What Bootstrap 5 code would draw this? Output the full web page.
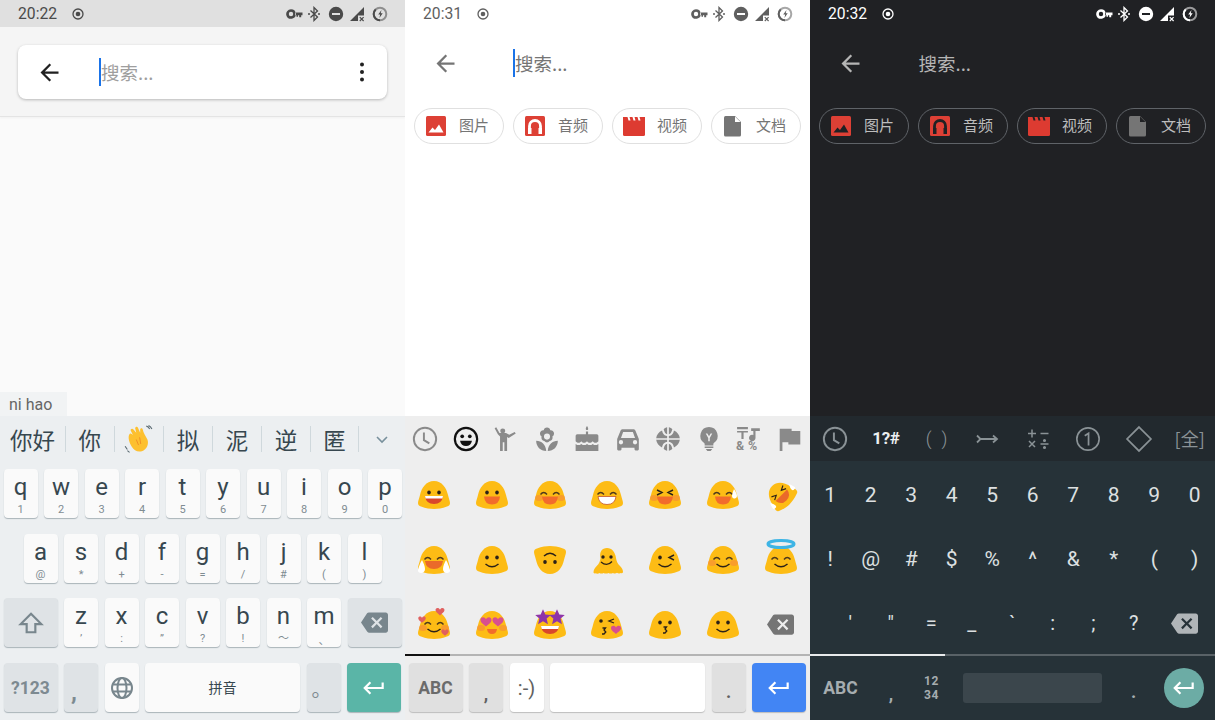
<!DOCTYPE html>
<html lang="zh">
<head>
<meta charset="utf-8">
<title>搜索</title>
<link href="https://cdn.jsdelivr.net/npm/bootstrap@5.3.0/dist/css/bootstrap.min.css" rel="stylesheet">
<style>
html,body{margin:0;height:720px;overflow:hidden;background:#fff}
body{font-family:Roboto,"Noto Sans CJK SC",sans-serif}
svg{display:block;overflow:visible;flex:none}
.cjk{font-family:"Noto Sans CJK SC",sans-serif}
.phone{width:405px;height:720px;flex:none}
.stat{height:27px;padding:0 17.5px 0 18px;color:#4a4a4a}
.stat .tm{font-size:15.7px;width:54px;line-height:27px}
.p2 .stat{color:#5f5f5f}
.p3 .stat{color:#fff}
.p1 .stat{background:#e0e0e0}
.rec{width:12px;height:12px}
.sico{width:102px;height:16px}
.p1 .app{background:#fafafa}
.p2 .app{background:#fff}
.p3{background:#202124}
.hd1{height:90px;background:#f5f5f5;border-bottom:1px solid #e4e4e4;box-shadow:0 1px 2px rgba(0,0,0,.04);padding:18px}
.scard{height:54px;background:#fff;border-radius:8px;box-shadow:0 1px 3px rgba(0,0,0,.25);padding:0 22px 0 18px}
.hd1 .caret-bar{margin-left:36px}
.back{width:27px;height:27px;fill:#212121}
.p2 .back{fill:#757575}
.p3 .back{fill:#b5b5b5}
.caret-bar{width:2px;height:28px;background:#1a73e8;flex:none}
.ph{font-size:18.5px;color:#9e9e9e;line-height:28px}
.p2 .ph{color:#757575}
.p3 .ph{color:#b5b5b5}
.hd2{height:73px;padding:0 0 2px 27px}
.hd2 .back{margin-top:1px}
.hd2 .caret-bar{margin-left:54px}
.p3 .hd2 .ph{margin-left:54.5px}
.chips{padding:8px 0 0 9px;gap:9px}
.chipx{width:90px;height:36px;border:1px solid #e0e0e0;border-radius:18px;padding-left:10px;gap:12px;font-size:15px;color:#757575}
.chipx span{margin-top:-2px}
.p3 .chipx{border-color:#5f6368;color:#bdbdbd}
.chipx svg{width:22px;height:22px}
.pin{width:67px;height:24px;background:#f1f3f4;color:#666;font-size:16px;line-height:25px;padding-left:9px}
.kb{height:304px;flex:none}
.kb1{background:#eceff1}
.kb2{background:#eee}
.kb3{background:#263238}
.cand{height:46px;color:#37474f;font-size:22.5px}
.cd{height:26px;border-right:1px solid #cfd8dc;line-height:26px;text-align:center}
.rowk{height:49px;gap:6.5px;padding:0 3.5px}
.rowk+.rowk{margin-top:15.7px}
.rows{padding-top:7px}
.ky{width:34px;height:49px;flex:none;background:#fafafa;border-radius:4px;box-shadow:0 1px 1px #aab4b9;color:#37474f}
.k15{width:54px}
.ksp{width:155px}
.kfn{background:#dfe3e6}
.kl{font-size:24px;line-height:28px;padding-top:4px;text-align:center}
.kh{font-size:11px;line-height:12px;text-align:center;color:#7f8c92;margin-top:3px}
.kc{display:flex;align-items:center;justify-content:center;height:100%}
.fnt{font-size:17.5px;font-weight:700;color:#7d8a91;padding-top:2px}
.punct{font-size:24px;font-weight:700;line-height:1;color:#7d8a91}
.pleft{align-items:flex-end;justify-content:flex-start;padding:0 0 8px 7px}
.pcomma{align-items:flex-end;padding-bottom:9px;font-size:18px}
.pdot{align-items:flex-end;padding-bottom:11px;font-size:18px}
.pcirc{font-size:20px;color:#7d8a91;justify-content:flex-start;align-items:flex-end;padding:0 0 8px 5px}
.kb2 .ky{background:#fff;box-shadow:0 1px 1px #bdbdbd;color:#616161}
.kb2 .kfn{background:#e0e0e0}
.kb2 .fnt{color:#6b6b6b}
.kb2 .punct{color:#616161}
.ken1{background:#5ab5a7!important}
.ken2{background:#4285f4!important}
.ken svg{width:26px;height:26px;fill:#fff}
.tabs{height:45px;padding-top:1px}
.tabc{width:40.5px}
.tabc svg{width:26px;height:26px;color:#8a8a8a}
.egrid{height:193px;padding-top:1px}
.erow{height:65px}
.ecell{width:57.857px}
.ecell svg{width:32px;height:28px}
.ecell .bksp{width:27px;height:27px;fill:#757575}
.dvd{height:2px;background:#b4b4b4}
.dvd i{display:block;height:2px;width:45px;background:#111}
.kb3 .dvd{background:#596267}
.kb3 .dvd i{width:135px;background:#e8eaeb}
.tabs3{background:#22292e;height:45px}
.tab3c{width:50.625px;color:#8a9296;font-size:18px}
.tab3c svg{width:26px;height:26px}
.t1q{color:#eceff1;font-weight:700;font-size:17px;letter-spacing:-.3px}
.parens{gap:10px;font-weight:300}
.sgrid{height:193px;color:#dde0e1;font-size:21px}
.srow{height:66px}
.srow1{padding-top:4px}
.srow3{padding-left:20px;height:60px}
.scell{width:40.5px}
.sym{font-size:20px}
.s3back{width:61px}
.s3back svg{width:27px;height:27px;fill:#b0b5b8}
.kb3 .ky{background:transparent;box-shadow:none;color:#b5bbbe}
.kb3 .fnt{color:#a6adb0}
.kb3 .punct{color:#a6adb0}
.spc3{width:139px;height:30px;background:#3b464c;border-radius:3px}
.k1234{font-size:12px;font-weight:700;line-height:14px;text-align:center;color:#a6adb0;letter-spacing:.6px}
.circ{width:40px;height:40px;border-radius:50%;background:#6caca5}
.circ svg{width:26px;height:26px;fill:#fff}
</style>
</head>
<body class="d-flex">
<svg class="d-none" xmlns="http://www.w3.org/2000/svg">
<defs>
<symbol id="sts" viewBox="0 0 102 16">
<path fill="currentColor" fill-rule="evenodd" d="M5 3.200a4.800 4.800 0 1 1-4.600 6.200A4.800 4.800 0 0 1 5 3.200zm0 2.600a2.200 2.200 0 1 0 0 4.400 2.200 2.200 0 0 0 0-4.400zM9 6.600h7.500v2.600h-1.300v2h-2v-2h-1.200v1.500H10.500V9.200H9z"/>
<path fill="none" stroke="currentColor" stroke-width="1.300" d="M24.500 4.500l7 6.500-3.500 3.500V1.500l3.500 3.500-7 6.500"/>
<circle cx="23" cy="8" r="1" fill="currentColor"/><circle cx="33" cy="8" r="1" fill="currentColor"/>
<path fill="currentColor" fill-rule="evenodd" d="M50 .8a7.200 7.200 0 1 1 0 14.400A7.200 7.200 0 0 1 50 .8zM46 7v2h8V7z"/>
<path fill="currentColor" d="M64 15L78 1v8.500h-6V15z"/>
<path fill="none" stroke="currentColor" stroke-width="1.200" d="M73.800 11.200l3.800 3.800m0-3.800L73.800 15"/>
<circle cx="94" cy="8" r="6.300" fill="none" stroke="currentColor" stroke-width="2" opacity=".55"/>
<path fill="none" stroke="currentColor" stroke-width="2" d="M94 14.300a6.300 6.300 0 0 1-6.300-6.300 6.300 6.300 0 0 1 2-4.600"/>
<path fill="currentColor" d="M95.500 4l-3.300 4.600h2l-.8 3.400 3.300-4.800h-2z"/>
</symbol>
<symbol id="rc" viewBox="0 0 12 12"><circle cx="6" cy="6" r="5" fill="none" stroke="currentColor" stroke-width="1.300"/><circle cx="6" cy="6" r="2.300" fill="currentColor"/></symbol>
<symbol id="bk" viewBox="0 0 24 24"><path d="M20 11H7.830l5.590-5.590L12 4l-8 8 8 8 1.410-1.410L7.830 13H20v-2z"/></symbol>
<symbol id="ent" viewBox="0 0 24 24"><path d="M19 7v4H5.830l3.580-3.590L8 6l-6 6 6 6 1.410-1.410L5.830 13H21V7z"/></symbol>
<symbol id="del" viewBox="0 0 24 24"><path d="M22 3H7c-.69 0-1.230.35-1.590.88L0 12l5.410 8.110c.36.53.9.89 1.590.89h15c1.100 0 2-.9 2-2V5c0-1.100-.9-2-2-2zm-3 12.590L17.590 17 14 13.410 10.410 17 9 15.590 12.590 12 9 8.410 10.410 7 14 10.590 17.590 7 19 8.410 15.410 12 19 15.590z"/></symbol>
<symbol id="i-img" viewBox="0 0 22 22"><rect x="1" y="1" width="20" height="20" rx="1.500" fill="#dd4035"/><path fill="currentColor" d="M3.500 17.500l4-5 2.500 2.500 4-5.500 4.500 8z"/></symbol>
<symbol id="i-aud" viewBox="0 0 22 22"><rect x="1" y="1" width="20" height="20" rx="1.500" fill="#dd4035"/><path fill="none" stroke="currentColor" stroke-width="2.800" d="M5.500 18v-7a5.500 5.500 0 0 1 11 0v7"/><rect x="4" y="13" width="3.500" height="6" fill="currentColor"/><rect x="14.500" y="13" width="3.500" height="6" fill="currentColor"/></symbol>
<symbol id="i-vid" viewBox="0 0 22 22"><path fill="#dd3b31" d="M0 2h22v17.500a1.500 1.500 0 0 1-1.500 1.500h-19A1.500 1.500 0 0 1 0 19.500z"/><path fill="currentColor" d="M4.500 2h2l1 3.500h-2zM9.500 2h2l1 3.500h-2zM14.500 2h2l1 3.500h-2z"/></symbol>
<symbol id="i-doc" viewBox="0 0 22 22"><path fill="#757575" d="M3.500 1H13l6 6v13a1.500 1.500 0 0 1-1.500 1.500h-14A1.500 1.500 0 0 1 2 20V2.500A1.500 1.500 0 0 1 3.500 1z"/><path fill="currentColor" d="M13 1.500V7h5.500z"/></symbol>
<symbol id="clk" viewBox="0 0 24 24"><circle cx="12" cy="12" r="10.300" fill="none" stroke="currentColor" stroke-width="1.800"/><path fill="none" stroke="currentColor" stroke-width="1.800" d="M11 6v7l5 3"/></symbol>
<g id="blob"><path fill="#fdbc15" d="M16 0C24 0 28.500 7 30 14c.5 2.500 2 6 2 8 0 2-1 3-3 3.500C24 27.300 20 28 16 28S8 27.300 3 25.500C1 25 0 24 0 22c0-2 1.500-5.500 2-8C3.500 7 8 0 16 0z"/></g>
<g id="blush"><ellipse cx="5" cy="17" rx="4" ry="3" fill="#f79036" opacity=".7"/><ellipse cx="27" cy="17" rx="4" ry="3" fill="#f79036" opacity=".7"/></g>
<g id="arcs"><path fill="none" stroke="#4e3a1c" stroke-width="1.400" d="M6.500 13.500q3.200-4 6.500 0M19 13.500q3.200-4 6.500 0"/></g>
<g id="dots"><ellipse cx="11" cy="11.500" rx="1.800" ry="2.100" fill="#2b2118"/><ellipse cx="21" cy="11.500" rx="1.800" ry="2.100" fill="#2b2118"/></g>
<g id="mouth"><path fill="#f26c2b" d="M8 15.500h16q-.8 8-8 8t-8-8z"/></g>
<g id="smile"><path fill="none" stroke="#2b2118" stroke-width="1.500" d="M9.500 18q6.500 5.500 13 0"/></g>
<g id="heart"><path d="M0 -1.500C-1-4-5-4-5-1c0 2.500 3 4 5 6 2-2 5-3.500 5-6 0-3-4-3-5-.5z"/></g>
<g id="star"><path fill="#8e35a8" d="M0-6l1.800 4 4.200.4-3.200 2.800 1 4.300L0 3.200l-3.800 2.300 1-4.300L-6-1.600l4.200-.4z"/></g>
</defs>
</svg>

<!-- Panel 1 -->
<div class="phone p1 d-flex flex-column">
  <div class="stat d-flex align-items-center"><span class="tm">20:22</span><svg class="rec"><use href="#rc"/></svg><svg class="sico ms-auto"><use href="#sts"/></svg></div>
  <div class="app flex-grow-1 d-flex flex-column">
    <div class="hd1"><div class="scard d-flex align-items-center"><svg class="back"><use href="#bk"/></svg><span class="caret-bar"></span><span class="ph cjk">搜索...</span>
      <span class="ms-auto d-flex flex-column"><svg width="6" height="22" viewBox="0 0 6 22"><circle cx="3" cy="3.500" r="2" fill="#212121"/><circle cx="3" cy="11" r="2" fill="#212121"/><circle cx="3" cy="18.500" r="2" fill="#212121"/></svg></span></div></div>
    <div class="mt-auto pin">ni hao</div>
  </div>
  <div class="kb kb1">
    <div class="cand d-flex align-items-center cjk">
      <div class="cd" style="width:66px">你好</div><div class="cd" style="width:48.5px">你</div>
      <div class="cd d-flex align-items-center justify-content-center" style="width:49.5px"><svg width="29" height="29" viewBox="0 0 26 26"><path fill="#fdc02f" d="M5 8c1-1 2 0 3 1L6 5c-.5-1.500 1.500-2.500 2.500-1L11 7 10 3c0-1.500 2-2 2.500-.5l2 4.500 0-3c.3-1.500 2-1.500 2.300 0 .5 3 2.700 6 4.200 9 1.500 4-.5 9-5 10.500-4 1.200-7-1-9-4C5 16 3 11 5 8z"/><path fill="none" stroke="#f08a24" stroke-width=".8" d="M14 11l1 6M11 13l2 5"/><path fill="none" stroke="#5a6a72" stroke-width="1" d="M1 19l2 3M3 23l2 1.500M20 1q2 .5 3 2.500M22 .5q2 1 3 3"/></svg></div>
      <div class="cd" style="width:49px">拟</div><div class="cd" style="width:49px">泥</div><div class="cd" style="width:49px">逆</div><div class="cd" style="width:48px">匿</div>
      <div class="flex-grow-1 d-flex justify-content-center"><svg width="14" height="9" viewBox="0 0 14 9"><path fill="none" stroke="#78909c" stroke-width="1.600" d="M2 2l5 5 5-5"/></svg></div>
    </div>
    <div class="rows">
      <div class="rowk d-flex">
        <div class="ky"><div class="kl">q</div><div class="kh">1</div></div><div class="ky"><div class="kl">w</div><div class="kh">2</div></div><div class="ky"><div class="kl">e</div><div class="kh">3</div></div><div class="ky"><div class="kl">r</div><div class="kh">4</div></div><div class="ky"><div class="kl">t</div><div class="kh">5</div></div><div class="ky"><div class="kl">y</div><div class="kh">6</div></div><div class="ky"><div class="kl">u</div><div class="kh">7</div></div><div class="ky"><div class="kl">i</div><div class="kh">8</div></div><div class="ky"><div class="kl">o</div><div class="kh">9</div></div><div class="ky"><div class="kl">p</div><div class="kh">0</div></div>
      </div>
      <div class="rowk d-flex justify-content-center">
        <div class="ky"><div class="kl">a</div><div class="kh">@</div></div><div class="ky"><div class="kl">s</div><div class="kh">*</div></div><div class="ky"><div class="kl">d</div><div class="kh">+</div></div><div class="ky"><div class="kl">f</div><div class="kh">-</div></div><div class="ky"><div class="kl">g</div><div class="kh">=</div></div><div class="ky"><div class="kl">h</div><div class="kh">/</div></div><div class="ky"><div class="kl">j</div><div class="kh">#</div></div><div class="ky"><div class="kl">k</div><div class="kh">(</div></div><div class="ky"><div class="kl">l</div><div class="kh">)</div></div>
      </div>
      <div class="rowk d-flex">
        <div class="ky k15 kfn"><div class="kc"><svg width="26" height="26" viewBox="0 0 24 24"><path fill="none" stroke="#78868d" stroke-width="2" d="M12 3.500l9.500 9.500H16v7.500H8V13H2.500z"/></svg></div></div>
        <div class="ky"><div class="kl">z</div><div class="kh">ʼ</div></div><div class="ky"><div class="kl">x</div><div class="kh">:</div></div><div class="ky"><div class="kl">c</div><div class="kh">”</div></div><div class="ky"><div class="kl">v</div><div class="kh">?</div></div><div class="ky"><div class="kl">b</div><div class="kh">!</div></div><div class="ky"><div class="kl">n</div><div class="kh">～</div></div><div class="ky"><div class="kl">m</div><div class="kh cjk">、</div></div>
        <div class="ky k15 kfn"><div class="kc"><svg width="27" height="27" viewBox="0 0 24 24" fill="#78868d"><use href="#del"/></svg></div></div>
      </div>
      <div class="rowk d-flex">
        <div class="ky k15 kfn"><div class="kc fnt">?123</div></div>
        <div class="ky kfn"><div class="kc punct pleft">,</div></div>
        <div class="ky"><div class="kc"><svg width="24" height="24" viewBox="0 0 24 24" fill="none" stroke="#78868d" stroke-width="2"><circle cx="12" cy="12" r="10"/><ellipse cx="12" cy="12" rx="4.500" ry="10"/><path d="M2.500 8.500h19M2.500 15.500h19"/></svg></div></div>
        <div class="ky ksp"><div class="kc cjk" style="font-size:14px">拼音</div></div>
        <div class="ky kfn"><div class="kc cjk pcirc">。</div></div>
        <div class="ky k15 ken ken1"><div class="kc"><svg><use href="#ent"/></svg></div></div>
      </div>
    </div>
  </div>
</div>

<!-- Panel 2 -->
<div class="phone p2 d-flex flex-column">
  <div class="stat d-flex align-items-center"><span class="tm">20:31</span><svg class="rec"><use href="#rc"/></svg><svg class="sico ms-auto"><use href="#sts"/></svg></div>
  <div class="app flex-grow-1">
    <div class="hd2 d-flex align-items-center"><svg class="back"><use href="#bk"/></svg><span class="caret-bar"></span><span class="ph cjk">搜索...</span></div>
    <div class="chips d-flex cjk">
      <div class="chipx d-flex align-items-center"><svg color="#fff"><use href="#i-img"/></svg><span>图片</span></div>
      <div class="chipx d-flex align-items-center"><svg color="#fff"><use href="#i-aud"/></svg><span>音频</span></div>
      <div class="chipx d-flex align-items-center"><svg color="#fff"><use href="#i-vid"/></svg><span>视频</span></div>
      <div class="chipx d-flex align-items-center"><svg color="#fff"><use href="#i-doc"/></svg><span>文档</span></div>
    </div>
  </div>
  <div class="kb kb2">
    <div class="tabs d-flex align-items-center">
      <div class="tabc d-flex justify-content-center"><svg><use href="#clk"/></svg></div>
      <div class="tabc d-flex justify-content-center"><svg viewBox="0 0 24 24" style="color:#111"><circle cx="12" cy="12" r="10.300" fill="none" stroke="currentColor" stroke-width="2"/><circle cx="8.500" cy="9.500" r="1.700" fill="currentColor"/><circle cx="15.500" cy="9.500" r="1.700" fill="currentColor"/><path fill="currentColor" d="M6.500 13.500h11q-1 5-5.500 5t-5.500-5z"/></svg></div>
      <div class="tabc d-flex justify-content-center"><svg viewBox="0 0 24 24" fill="#8a8a8a"><circle cx="9" cy="4.500" r="2.300"/><path d="M1.500 2l1.500-.8L6 6.500h6l3 1.500 5-2.500 1 1.500-6.500 4-1.500-.8V23h-2.500v-8h-1.500v8H6.500V9.800L4.500 7.500z"/></svg></div>
      <div class="tabc d-flex justify-content-center"><svg viewBox="0 0 24 24" fill="#8a8a8a"><path fill-rule="evenodd" d="M12 1.500a3 3 0 0 1 3 2.500 3 3 0 0 1 3.500 3 3 3 0 0 1-1.500 2.800 3 3 0 0 1-2.500 4 3 3 0 0 1-5 0 3 3 0 0 1-2.500-4A3 3 0 0 1 5.500 7 3 3 0 0 1 9 4a3 3 0 0 1 3-2.500zm0 5.500a2.800 2.800 0 1 0 0 5.600 2.800 2.800 0 0 0 0-5.600z"/><path d="M2 13.500c5 0 9 3.500 9.300 9.500C6 23 2 19 2 13.500zM22 13.500c-5 0-9 3.500-9.300 9.500C18 23 22 19 22 13.500z"/></svg></div>
      <div class="tabc d-flex justify-content-center"><svg viewBox="0 0 24 24" fill="#8a8a8a"><path d="M12 0c1 1.500 1.300 2.300 1 3.200-.3.800-1.700.8-2 0-.3-.9 0-1.700 1-3.200zM11 5h2v3h-2zM3 7.500h18a1.500 1.500 0 0 1 1.500 1.500v5c-2 2-3.500 2-5.200 0-2 2-3.600 2-5.300 0-2 2-3.500 2-5.300 0-1.600 2-3.200 2-5.200 0V9A1.500 1.500 0 0 1 3 7.500zM1.500 16.500c2 1.500 3.500 1.500 5.200 0 2 1.500 3.500 1.500 5.300 0 2 1.500 3.500 1.500 5.300 0 1.700 1.500 3.200 1.500 5.200 0V23h-21z"/></svg></div>
      <div class="tabc d-flex justify-content-center"><svg viewBox="0 0 24 24" fill="#8a8a8a"><path fill-rule="evenodd" d="M5 4.500C5.300 3.600 6.200 3 7 3h10c.8 0 1.700.6 2 1.500L22 12v9.500a1 1 0 0 1-1 1h-2a1 1 0 0 1-1-1V20H6v1.500a1 1 0 0 1-1 1H3a1 1 0 0 1-1-1V12zM7.500 5.500L5.500 11h13l-2-5.500zM5.500 13a2 2 0 1 0 0 4 2 2 0 0 0 0-4zm13 0a2 2 0 1 0 0 4 2 2 0 0 0 0-4z"/></svg></div>
      <div class="tabc d-flex justify-content-center"><svg viewBox="0 0 24 24" fill="#8a8a8a"><path d="M11.200 1.100v6.500C9.800 7.400 8.700 6 8 3 8.800 2 10 1.400 11.200 1.100zM12.800 1.100C14 1.400 15.200 2 16 3c-.7 3-1.800 4.400-3.200 4.600zM6.500 4.200c.6 2.800 2 5 4.700 5v2H1.100C1.400 8.300 3.500 5.500 6.500 4.200zM17.500 4.200c3 1.300 5.100 4.100 5.400 7H12.800v-2c2.700 0 4.100-2.200 4.700-5zM1.100 12.800h10.100v2c-2.700 0-4.100 2.200-4.700 5-3-1.300-5.100-4.100-5.400-7zM12.800 12.800h10.100c-.3 2.900-2.400 5.700-5.400 7-.6-2.800-2-5-4.700-5zM11.200 16.400v6.500C10 22.600 8.800 22 8 21c.7-3 1.800-4.400 3.200-4.600zM12.800 16.400c1.400.2 2.500 1.600 3.200 4.600-.8 1-2 1.600-3.200 1.900z"/></svg></div>
      <div class="tabc d-flex justify-content-center"><svg viewBox="0 0 24 24" fill="#8a8a8a"><path fill-rule="evenodd" d="M12 1a8 8 0 0 1 4.500 14.600c-.3.200-.5.500-.5.900V18H8v-1.500c0-.4-.2-.7-.5-.9A8 8 0 0 1 12 1zM9 7l2.300 4v3h1.400v-3L15 7h-1.500L12 9.500 10.500 7z"/><path d="M8 19h8v1.300H8zM9 21.300h6L13.500 23h-3z"/></svg></div>
      <div class="tabc d-flex justify-content-center"><svg viewBox="0 0 24 24" fill="#8a8a8a"><path d="M1 1h10v2H1zM1 4.500h10V6H7v6H5V6H1zM14 2h8v2.500h-4v6.500a3 3 0 1 1-2-2.800V4.500h-2z"/><text x="0" y="22.500" font-family="Roboto,sans-serif" font-size="11.500" font-weight="700">&amp;</text><text x="11" y="22.500" font-family="Roboto,sans-serif" font-size="11.500" font-weight="700">%</text></svg></div>
      <div class="tabc d-flex justify-content-center"><svg viewBox="0 0 24 24" fill="#8a8a8a"><path d="M2.500 2.500h11v2h8V17h-11v-2H5v8H2.500z"/></svg></div>
    </div>
    <div class="egrid">
      <div class="erow d-flex align-items-center">
        <div class="ecell d-flex justify-content-center"><svg viewBox="0 0 32 28"><use href="#blob"/><use href="#dots"/><path fill="#d9472b" d="M7 15h18q-1 8-9 8t-9-8z"/><path fill="#fff" d="M7 15h18l-.6 2.500H7.600z"/></svg></div>
        <div class="ecell d-flex justify-content-center"><svg viewBox="0 0 32 28"><use href="#blob"/><use href="#dots"/><use href="#mouth"/></svg></div>
        <div class="ecell d-flex justify-content-center"><svg viewBox="0 0 32 28"><use href="#blob"/><use href="#blush"/><use href="#arcs"/><use href="#mouth"/></svg></div>
        <div class="ecell d-flex justify-content-center"><svg viewBox="0 0 32 28"><use href="#blob"/><use href="#arcs"/><path fill="#fff" stroke="#c4552a" stroke-width=".8" d="M7 15.500h18q-1 8-9 8t-9-8z"/></svg></div>
        <div class="ecell d-flex justify-content-center"><svg viewBox="0 0 32 28"><use href="#blob"/><use href="#blush"/><path fill="none" stroke="#2b2118" stroke-width="1.400" d="M8 9l5 2.500-5 2.500M24 9l-5 2.500 5 2.500"/><use href="#mouth"/></svg></div>
        <div class="ecell d-flex justify-content-center"><svg viewBox="0 0 32 28"><use href="#blob"/><use href="#arcs"/><use href="#mouth"/><path fill="#fff" d="M27 8c1.500 2.500 3 5 3 7s-2 2.500-3 2.500-2-1-2-2.500 1-4.500 2-7z"/></svg></div>
        <div class="ecell d-flex justify-content-center"><svg viewBox="0 0 32 28"><g transform="rotate(-45 16 14) translate(1.600 1.400) scale(.9)"><use href="#blob"/><path fill="none" stroke="#2b2118" stroke-width="1.300" d="M7 8l5 2.500-5 2.500M25 8l-5 2.500 5 2.500"/><path fill="#ea6a2a" d="M7 14.500h18q-1 8-9 8t-9-8z"/><path fill="#fff" d="M1 12c1.500 2 2.500 4 2.500 6s-1.500 2-2.500 2-2.500-.5-2-2 1-4 2-6zM31 12c-1.500 2-2.500 4-2.500 6s1.500 2 2.500 2 2.500-.5 2-2-1-4-2-6z"/></g></svg></div>
      </div>
      <div class="erow d-flex align-items-center">
        <div class="ecell d-flex justify-content-center"><svg viewBox="0 0 32 28"><use href="#blob"/><use href="#arcs"/><path fill="#ea6a2a" d="M7 15h18q-1 8-9 8t-9-8z"/><path fill="#fff" d="M4 14c1.500 3 3 6 3 9s-2.500 4-4 4-3.500-1-3-3 2-7 4-10zM28 14c-1.500 3-3 6-3 9s2.500 4 4 4 3.500-1 3-3-2-7-4-10z"/></svg></div>
        <div class="ecell d-flex justify-content-center"><svg viewBox="0 0 32 28"><use href="#blob"/><use href="#dots"/><use href="#smile"/></svg></div>
        <div class="ecell d-flex justify-content-center"><svg viewBox="0 0 32 28"><path fill="#fdbc15" d="M16 28C8 28 3.500 21 2 14 1.500 11.500 0 8 0 6 0 4 1 3 3 2.500 8 .7 12 0 16 0s8 .7 13 2.500c2 .5 3 1.500 3 3.500 0 2-1.500 5.500-2 8-1.500 7-6 14-14 14z"/><ellipse cx="11" cy="16" rx="1.800" ry="2.100" fill="#2b2118"/><ellipse cx="21" cy="16" rx="1.800" ry="2.100" fill="#2b2118"/><path fill="none" stroke="#2b2118" stroke-width="1.500" d="M10 10q6-5.500 12 0"/></svg></div>
        <div class="ecell d-flex justify-content-center"><svg viewBox="0 0 32 28"><path fill="#fdbc15" d="M16 2c5 0 8 4 9 10 .5 3 1 5 4 8 2 2 3 4 3 6 0 1-1 1.500-2 1-1.500.8-3 .5-4-.2-1 1-3 1-4 .2-1.500.8-3.500.8-4.500 0-1.500.8-3.500.8-5 0-1 .8-3 .8-4 0-1 .7-2.500 1-4 .2-1 .5-2 0-2-1 0-2 1-4 3-6 3-3 3.500-5 4-8C8 6 11 2 16 2z"/><circle cx="12" cy="11" r="1.700" fill="#2b2118"/><circle cx="20" cy="11" r="1.700" fill="#2b2118"/><path fill="none" stroke="#2b2118" stroke-width="1.300" d="M10 16q6 5 11-.5"/></svg></div>
        <div class="ecell d-flex justify-content-center"><svg viewBox="0 0 32 28"><use href="#blob"/><ellipse cx="11" cy="11.500" rx="1.800" ry="2.100" fill="#2b2118"/><path fill="none" stroke="#2b2118" stroke-width="1.400" d="M25 9l-5 2.500 5 2.500M9.500 18q6.500 5.500 13 0"/></svg></div>
        <div class="ecell d-flex justify-content-center"><svg viewBox="0 0 32 28"><use href="#blob"/><use href="#blush"/><use href="#arcs"/><use href="#smile"/></svg></div>
        <div class="ecell d-flex justify-content-center"><svg viewBox="0 0 32 28"><use href="#blob"/><ellipse cx="16" cy="-2" rx="13" ry="3.500" fill="none" stroke="#3db4e5" stroke-width="3"/><use href="#arcs"/><use href="#smile"/></svg></div>
      </div>
      <div class="erow d-flex align-items-center">
        <div class="ecell d-flex justify-content-center"><svg viewBox="0 0 32 28"><use href="#blob"/><use href="#blush"/><use href="#arcs"/><use href="#smile"/><g fill="#e0605f"><use href="#heart" transform="translate(22 0) scale(.9)"/><use href="#heart" transform="translate(4 8) scale(.75)"/><use href="#heart" transform="translate(27 21) scale(.75)"/></g></svg></div>
        <div class="ecell d-flex justify-content-center"><svg viewBox="0 0 32 28"><use href="#blob"/><use href="#blush"/><g fill="#d84f8f"><use href="#heart" transform="translate(10 10) scale(1.100)"/><use href="#heart" transform="translate(22 10) scale(1.100)"/></g><path fill="#f26c2b" d="M11 18h10q-.5 5-5 5t-5-5z"/></svg></div>
        <div class="ecell d-flex justify-content-center"><svg viewBox="0 0 32 28"><use href="#blob"/><use href="#star" transform="translate(9 6) scale(1.300)"/><use href="#star" transform="translate(23 6) scale(1.300)"/><path fill="#d9472b" d="M7 15h18q-1 8-9 8t-9-8z"/><path fill="#fff" d="M7 15h18l-.8 3H7.800z"/></svg></div>
        <div class="ecell d-flex justify-content-center"><svg viewBox="0 0 32 28"><use href="#blob"/><circle cx="10" cy="10" r="1.800" fill="#2b2118"/><path fill="none" stroke="#2b2118" stroke-width="1.300" d="M23 8l-5 2 5 2M11.500 17h3l-1.500 2 1.800 2-1.800 2h-2"/><use href="#heart" transform="translate(25 18) scale(1)" fill="#d84f8f"/></svg></div>
        <div class="ecell d-flex justify-content-center"><svg viewBox="0 0 32 28"><use href="#blob"/><use href="#dots"/><path fill="none" stroke="#2b2118" stroke-width="1.300" d="M14.500 16h3l-1.500 2 1.800 2-1.800 2h-2"/></svg></div>
        <div class="ecell d-flex justify-content-center"><svg viewBox="0 0 32 28"><use href="#blob"/><use href="#dots"/><use href="#smile"/></svg></div>
        <div class="ecell d-flex justify-content-center"><svg class="bksp"><use href="#del"/></svg></div>
      </div>
    </div>
    <div class="dvd"><i></i></div>
    <div class="rows">
      <div class="rowk d-flex">
        <div class="ky k15 kfn"><div class="kc fnt">ABC</div></div>
        <div class="ky kfn"><div class="kc punct pcomma">,</div></div>
        <div class="ky"><div class="kc" style="font-size:20px">:-)</div></div>
        <div class="ky ksp"></div>
        <div class="ky kfn"><div class="kc punct pdot">.</div></div>
        <div class="ky k15 ken ken2"><div class="kc"><svg><use href="#ent"/></svg></div></div>
      </div>
    </div>
  </div>
</div>

<!-- Panel 3 -->
<div class="phone p3 d-flex flex-column">
  <div class="stat d-flex align-items-center"><span class="tm">20:32</span><svg class="rec"><use href="#rc"/></svg><svg class="sico ms-auto"><use href="#sts"/></svg></div>
  <div class="app flex-grow-1">
    <div class="hd2 d-flex align-items-center"><svg class="back"><use href="#bk"/></svg><span class="ph cjk">搜索...</span></div>
    <div class="chips d-flex cjk">
      <div class="chipx d-flex align-items-center"><svg color="#202124"><use href="#i-img"/></svg><span>图片</span></div>
      <div class="chipx d-flex align-items-center"><svg color="#202124"><use href="#i-aud"/></svg><span>音频</span></div>
      <div class="chipx d-flex align-items-center"><svg color="#202124"><use href="#i-vid"/></svg><span>视频</span></div>
      <div class="chipx d-flex align-items-center"><svg color="#202124"><use href="#i-doc"/></svg><span>文档</span></div>
    </div>
  </div>
  <div class="kb kb3">
    <div class="tabs3 d-flex align-items-center">
      <div class="tab3c d-flex justify-content-center"><svg><use href="#clk"/></svg></div>
      <div class="tab3c d-flex justify-content-center t1q">1?#</div>
      <div class="tab3c d-flex justify-content-center parens"><span>(</span><span>)</span></div>
      <div class="tab3c d-flex justify-content-center"><svg viewBox="0 0 26 26" fill="none" stroke="currentColor" stroke-width="1.800"><path d="M3 9.500l3.500 3.500L3 16.500M5 13h17M19 9.500l4 3.500-4 3.500"/></svg></div>
      <div class="tab3c d-flex justify-content-center"><svg viewBox="0 0 26 26" fill="none" stroke="currentColor" stroke-width="1.500"><path d="M3 7.500h8M7 3.500v8M15.500 7.500h8M4 15l6 6M10 15l-6 6M15.500 18h8"/><circle cx="19.500" cy="14.500" r=".8"/><circle cx="19.500" cy="21.500" r=".8"/></svg></div>
      <div class="tab3c d-flex justify-content-center"><svg viewBox="0 0 24 24"><circle cx="12" cy="12" r="10.300" fill="none" stroke="currentColor" stroke-width="1.500"/><path fill="none" stroke="currentColor" stroke-width="1.600" d="M9 9l3.500-2.200V18"/></svg></div>
      <div class="tab3c d-flex justify-content-center"><svg viewBox="0 0 24 24" fill="none" stroke="currentColor" stroke-width="1.600"><path d="M12 1l11 11-11 11L1 12z"/></svg></div>
      <div class="tab3c d-flex justify-content-center cjk" style="font-size:18px;white-space:nowrap">[全]</div>
    </div>
    <div class="sgrid">
      <div class="srow srow1 d-flex align-items-center"><div class="scell text-center">1</div><div class="scell text-center">2</div><div class="scell text-center">3</div><div class="scell text-center">4</div><div class="scell text-center">5</div><div class="scell text-center">6</div><div class="scell text-center">7</div><div class="scell text-center">8</div><div class="scell text-center">9</div><div class="scell text-center">0</div></div>
      <div class="srow d-flex align-items-center"><div class="scell text-center">!</div><div class="scell text-center">@</div><div class="scell text-center">#</div><div class="scell text-center">$</div><div class="scell text-center">%</div><div class="scell text-center">^</div><div class="scell text-center">&amp;</div><div class="scell text-center">*</div><div class="scell text-center">(</div><div class="scell text-center">)</div></div>
      <div class="srow srow3 d-flex align-items-center sym"><div class="scell text-center">'</div><div class="scell text-center">"</div><div class="scell text-center">=</div><div class="scell text-center">_</div><div class="scell text-center">`</div><div class="scell text-center">:</div><div class="scell text-center">;</div><div class="scell text-center">?</div><div class="s3back d-flex justify-content-center"><svg><use href="#del"/></svg></div></div>
    </div>
    <div class="dvd"><i></i></div>
    <div class="rows">
      <div class="rowk d-flex">
        <div class="ky k15"><div class="kc fnt">ABC</div></div>
        <div class="ky"><div class="kc punct pcomma">,</div></div>
        <div class="ky"><div class="kc"><div class="k1234"><div>12</div><div>34</div></div></div></div>
        <div class="ky ksp"><div class="kc"><div class="spc3"></div></div></div>
        <div class="ky"><div class="kc punct pdot">.</div></div>
        <div class="ky k15"><div class="kc"><div class="circ d-flex align-items-center justify-content-center"><svg><use href="#ent"/></svg></div></div></div>
      </div>
    </div>
  </div>
</div>
</body>
</html>
